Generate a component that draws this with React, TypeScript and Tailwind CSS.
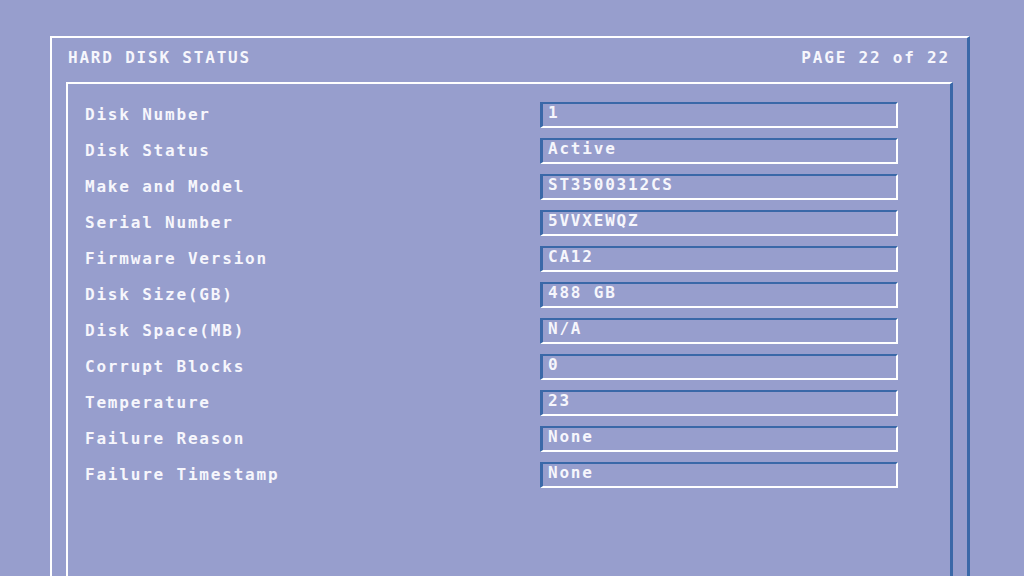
import React from "react";

const rows: [string, string][] = [
  ["Disk Number", "1"],
  ["Disk Status", "Active"],
  ["Make and Model", "ST3500312CS"],
  ["Serial Number", "5VVXEWQZ"],
  ["Firmware Version", "CA12"],
  ["Disk Size(GB)", "488 GB"],
  ["Disk Space(MB)", "N/A"],
  ["Corrupt Blocks", "0"],
  ["Temperature", "23"],
  ["Failure Reason", "None"],
  ["Failure Timestamp", "None"],
];

export default function App() {
  return (
    <div
      className="w-[1024px] h-[576px] overflow-hidden bg-[#979ecd] text-[#f6f6fc] text-[16px] leading-4 font-bold tracking-[1.8px]"
      style={{ fontFamily: '"DejaVu Sans Mono", "Liberation Mono", monospace' }}
    >
      <div className="ml-[50px] mt-[36px] w-[920px] h-[600px] border-t-2 border-l-2 border-white border-r-[3px] border-r-[#3a68a8]">
        <div className="flex justify-between pl-[16px] pr-[17px] pt-[12px] h-[28px]">
          <span>HARD DISK STATUS</span>
          <span>PAGE 22 of 22</span>
        </div>
        <div className="mt-[16px] mx-[14px] h-[560px] border-t-2 border-l-2 border-white border-r-[3px] border-r-[#3a68a8] pl-[17px] pt-[18px]">
          {rows.map(([label, value]) => (
            <div key={label} className="flex items-center h-[26px] mb-[10px]">
              <div className="w-[455px]">{label}</div>
              <div className="w-[358px] h-[26px] border-t-2 border-l-[3px] border-[#3a68a8] border-b-2 border-r-2 border-b-white border-r-white pl-[5px] pt-[1px]">
                {value}
              </div>
            </div>
          ))}
        </div>
      </div>
    </div>
  );
}
